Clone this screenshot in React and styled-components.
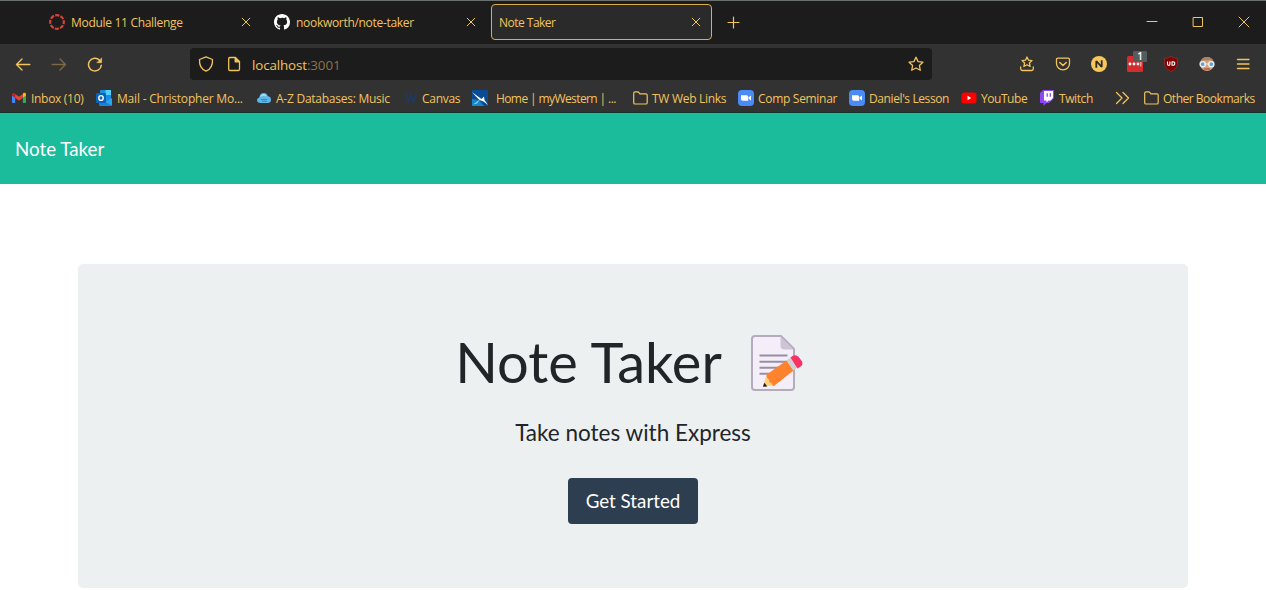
import React from "react";
import styled, { createGlobalStyle } from "styled-components";

const GOLD = "#f2c45f";

const Global = createGlobalStyle`
  *, *::before, *::after { box-sizing: border-box; }
  html, body { margin: 0; padding: 0; background: #fff; }
  body { height: 590px; overflow: hidden; font-family: Lato, sans-serif; color: #212529; }
`;

/* ---------- browser chrome ---------- */

const Chrome = styled.header`
  height: 113px;
  background: #323232;
  border-top: 1px solid #6c706e;
  border-bottom: 1px solid #10362f;
  color: ${GOLD};
  font-family: "Open Sans", "Noto Sans", sans-serif;
  font-size: 12px;
  svg { display: block; flex: none; }
`;

const TabStrip = styled.div`
  display: flex;
  align-items: center;
  height: 43px;
  background: #1c1c1c;
  padding: 0 0 1px 41px;
`;

const Tab = styled.div`
  display: flex;
  align-items: center;
  gap: 6px;
  width: ${(p) => p.$w}px;
  height: 36px;
  padding: 0 ${(p) => (p.$active ? 10 : 15)}px 0 ${(p) => (p.$active ? 7 : 8)}px;
  border-radius: 4px;
  ${(p) => p.$active && `border: 1px solid #dcae4c; background: #2a2a2a;`}
`;

const Label = styled.span`
  white-space: pre;
  line-height: 16px;
  letter-spacing: ${(p) => p.$ls || 0}px;
`;

const TabLabel = styled(Label)`
  flex: 1;
  padding-top: 1px;
`;

const NewTab = styled.div`
  margin-left: 15px;
`;

const WindowButtons = styled.div`
  display: flex;
  gap: 34px;
  margin-left: auto;
  padding-right: 16px;
`;

const Toolbar = styled.div`
  display: flex;
  align-items: center;
  height: 40px;
  padding: 0 15px;
`;

const NavButtons = styled.div`
  display: flex;
  gap: 20px;
  width: 175px;
`;

const UrlBar = styled.div`
  display: flex;
  align-items: center;
  width: 742px;
  height: 32px;
  padding: 0 8px;
  border-radius: 4px;
  background: #1c1c1c;
`;

const Url = styled(Label)`
  flex: 1;
  margin-left: 10px;
  padding-top: 1px;
  font-size: 13.4px;
  line-height: 18px;
`;

const Port = styled.span`
  color: #8b7544;
`;

const PageIcon = styled.div`
  margin-left: 12px;
`;

const Extensions = styled.div`
  display: flex;
  gap: 20px;
  margin-left: auto;
`;

const ExtBox = styled.div`
  position: relative;
  width: 16px;
  height: 16px;
`;

const Badge = styled.span`
  position: absolute;
  left: 6px;
  top: -5px;
  width: 14px;
  height: 11px;
  border-radius: 1px;
  background: #565b5e;
  color: #fff;
  font: 600 10px/11px "Open Sans", sans-serif;
  text-align: center;
`;

const Bookmarks = styled.div`
  display: flex;
  align-items: center;
  height: 28px;
  padding-left: 11px;
`;

const Bookmark = styled.div`
  display: flex;
  align-items: center;
  flex: none;
  gap: ${(p) => p.$gap || 4}px;
  width: ${(p) => p.$w}px;
  ${Label} { padding-top: 1px; }
`;

/* ---------- page ---------- */

const Navbar = styled.nav`
  display: flex;
  align-items: center;
  height: 71px;
  padding: 0 15px;
  background: #1abc9c;
`;

const Brand = styled.a`
  color: #fff;
  font-size: 18.75px;
  line-height: 28px;
`;

const Main = styled.main`
  width: 1110px;
  margin: 80px auto 0;
`;

const Jumbotron = styled.section`
  display: flex;
  flex-direction: column;
  align-items: center;
  height: 324px;
  padding-top: 64px;
  border-radius: 5px;
  background: #ecf0f1;
`;

const Title = styled.h1`
  display: flex;
  align-items: center;
  gap: 28px;
  height: 67px;
  margin: 0;
  padding-right: 5px;
  font-weight: 400;
  font-size: 56px;
  line-height: 67px;
  svg { margin-top: 2px; }
`;

const Subtitle = styled.h4`
  margin: 23px 0 0;
  font-weight: 400;
  font-size: 22.5px;
  line-height: 30px;
`;

const Button = styled.button`
  width: 130px;
  height: 46px;
  margin: 30px 0 0;
  padding: 0;
  border: 0;
  border-radius: 4px;
  background: #2c3e50;
  color: #fff;
  font: 400 18.75px/28px Lato, sans-serif;
`;

/* ---------- icons ---------- */

const Svg = ({ w = 16, h = 16, vb, children, c = GOLD, sw = 1.3 }) => (
  <svg width={w} height={h} viewBox={vb || `0 0 ${w} ${h}`} fill="none" stroke={c} strokeWidth={sw} strokeLinecap="round" strokeLinejoin="round">
    {children}
  </svg>
);

const Close = () => <Svg w={10} h={10} sw={1}><path d="M1.200 1.200l7.600 7.600M8.800 1.200l-7.600 7.600" /></Svg>;
const CanvasRing = () => (
  <svg width="16" height="16" viewBox="0 0 16 16">
    <circle cx="8" cy="8" r="6.8" fill="none" stroke="#d8433a" strokeWidth="2.2" strokeDasharray="4.14 1.2" strokeDashoffset="2" />
  </svg>
);
const Github = () => (
  <svg width="16" height="16" viewBox="0 0 16 16" fill="#fff">
    <path d="M8 0C3.58 0 0 3.58 0 8c0 3.54 2.29 6.53 5.47 7.59.4.07.55-.17.55-.38 0-.19-.01-.82-.01-1.49-2.01.37-2.53-.49-2.69-.94-.09-.23-.48-.94-.82-1.13-.28-.15-.68-.52-.01-.53.63-.01 1.08.58 1.23.82.72 1.21 1.87.87 2.33.66.07-.52.28-.87.51-1.07-1.78-.2-3.64-.89-3.64-3.95 0-.87.31-1.59.82-2.15-.08-.2-.36-1.02.08-2.12 0 0 .67-.21 2.2.82A7.6 7.6 0 0 1 8 3.86c.68 0 1.36.09 2 .27 1.53-1.04 2.2-.82 2.2-.82.44 1.1.16 1.92.08 2.12.51.56.82 1.27.82 2.15 0 3.07-1.87 3.75-3.65 3.95.29.25.54.73.54 1.48 0 1.07-.01 1.93-.01 2.2 0 .21.15.46.55.38A8.01 8.01 0 0 0 16 8c0-4.42-3.58-8-8-8z" />
  </svg>
);
const Gmail = () => (
  <svg width="16" height="16" viewBox="0 0 16 16">
    <path d="M1 5v7.2q0 .8.8.8h2.4V7.2z" fill="#4285f4" />
    <path d="M15 5v7.2q0 .8-.8.8h-2.4V7.2z" fill="#34a853" />
    <path d="M11.800 4v3.800L15 5.400V4.300c0-1.500-1.600-1.900-2.600-1.200z" fill="#fbbc04" />
    <path d="M1 5.400l3.200 2.400V4l-.6-.6C2.600 2.500 1 3 1 4.300z" fill="#c5221f" />
    <path d="M4.200 7.800V3.900L8 6.800l3.800-2.900v3.900L8 10.700z" fill="#ea4335" />
  </svg>
);
const Outlook = () => (
  <svg width="16" height="16" viewBox="0 0 16 16">
    <rect x="4" y="0" width="11" height="12" rx="1" fill="#1a8fe0" />
    <rect x="9.5" y="0" width="5.5" height="5" fill="#50d0fa" />
    <rect x="4" y="5" width="5.5" height="4" fill="#1266b4" />
    <path d="M3 15.500L16 8v6.700q0 1-1 1H4q-1 0-1-.8z" fill="#2ba5ee" />
    <path d="M3 9l13 6.500H4q-1 0-1-1z" fill="#1784d8" />
    <rect x="0" y="3" width="10" height="10" rx="1" fill="#0a63b8" />
    <ellipse cx="5" cy="8" rx="2.2" ry="2.4" fill="none" stroke="#fff" strokeWidth="1.4" />
  </svg>
);
const Cloud = () => (
  <svg width="16" height="16" viewBox="0 0 16 16">
    <path d="M4.500 13Q1 13 1 10q0-2 2.300-2.600Q4 3 7.800 3q3 0 4 3.200 3.200.4 3.200 3.500 0 3.300-3.500 3.300z" fill="#5db5e8" />
    <path d="M4 7q1-3 4-3 2 0 3 2.500Q7 5.500 4 7z" fill="#a6dcf7" />
    <path d="M5 9.500h6M6 11.200h5" stroke="#2f84bd" strokeWidth=".9" />
  </svg>
);
const WMark = () => (
  <svg width="16" height="16" viewBox="0 0 16 16" fill="none" stroke="#1e3a66">
    <path d="M3.500 3.500L6 12.500 9 4l2.500 8.500L14 3.500" strokeWidth="1.400" />
    <path d="M2 3.500h3M7.500 3.500h3M12.500 3.500h3" strokeWidth=".8" />
  </svg>
);
const Western = () => (
  <svg width="16" height="16" viewBox="0 0 16 16">
    <rect width="16" height="16" fill="#0b4a94" />
    <path d="M0 9l7 1 5 6H0z" fill="#1585c8" />
    <path d="M0 2l6 4.500L9.500 9 12 6.500l.5 3.500L16 15l-4.500-3.500L7.500 10 4 6.500z" fill="#fff" />
    <path d="M8 9.500L1 14.500l4-1z" fill="#8fd0f2" />
  </svg>
);
const Folder = () => <Svg sw={1.2}><path d="M1.700 12.700V3.200q0-1.400 1.400-1.400h2.600q.8 0 1.300.8l.9 1.300h6q1.300 0 1.300 1.300v7.500q0 1.300-1.300 1.300H3q-1.300 0-1.300-1.300z" /></Svg>;
const Zoom = () => (
  <svg width="16" height="16" viewBox="0 0 16 16">
    <rect width="16" height="16" rx="4" fill="#4a8cf7" />
    <path d="M3 5.300h5.500q1.700 0 1.700 1.500v3.900H4.800Q3 10.700 3 9z" fill="#fff" />
    <path d="M10.700 7.300L13 5.500v5l-2.300-1.700z" fill="#fff" />
  </svg>
);
const Youtube = () => (
  <svg width="16" height="16" viewBox="0 0 16 16">
    <rect x=".5" y="2.5" width="15" height="11" rx="2.5" fill="#f00" />
    <path d="M6.500 5.800v4.400L10.300 8z" fill="#fff" />
  </svg>
);
const Twitch = () => (
  <svg width="16" height="16" viewBox="0 0 16 16">
    <path d="M4 0L1 3v10h3.500v3l3-3H10l5-5V0z" fill="#8f45f5" />
    <path d="M5 1v9.500h2.500v2l2-2h2L14 8V1z" fill="#fff" />
    <path d="M8.200 3.200v3.600M11.300 3.200v3.600" stroke="#8f45f5" strokeWidth="1.3" />
  </svg>
);
const StarPath = "M8 1.200l2.100 4.400 4.800.6-3.500 3.300.9 4.800L8 12l-4.300 2.300.9-4.800L1.100 6.200l4.800-.6z";

const Memo = () => (
  <svg width="56" height="58" viewBox="0 0 56 58">
    <path d="M5 2h26l13 13v38q0 3-3 3H5q-3 0-3-3V5q0-3 3-3z" fill="#f3eef8" stroke="#b4acbc" strokeWidth="2" />
    <path d="M30.500 2.500v9q0 4 4 4h9z" fill="#cdc4d6" />
    <path d="M9.500 21.500h28M9.500 27.700h28M9.500 33.700h20M9.500 39.700h14" stroke="#998ea4" strokeWidth="1.9" />
    <path d="M13 52.500l3.700-12L25 51z" fill="#ffce7c" />
    <path d="M13 52.800l1.300-4 3 3.600z" fill="#1c1c1c" />
    <path d="M16.700 40.500L36.500 26.500l7 10L24 52q-2 0-2.500-3-3-.5-2.300-3.500-3-1-2.500-5z" fill="#ff822d" />
    <path d="M36.500 26.500l4-3 7 10-4 3z" fill="#d3cdd4" />
    <path d="M40.500 23.500l2-1.500q3.500-2 6 .8l3.500 4.700q1.500 3-1.500 5l-3 2z" fill="#fb3064" />
  </svg>
);

const bookmarks = [
  { icon: <Gmail />, text: "Inbox (10)", w: 85, ls: -0.3 },
  { icon: <Outlook />, text: "Mail - Christopher Mo...", w: 160, gap: 5, ls: -0.2 },
  { icon: <Cloud />, text: "A-Z Databases: Music", w: 146, ls: -0.25 },
  { icon: <WMark />, text: "Canvas", w: 70, ls: -0.3 },
  { icon: <Western />, text: "Home | myWestern | ...", w: 160, gap: 8, ls: -0.6 },
  { icon: <Folder />, text: "TW Web Links", w: 106, ls: -0.3 },
  { icon: <Zoom />, text: "Comp Seminar", w: 111, ls: -0.3 },
  { icon: <Zoom />, text: "Daniel's Lesson", w: 112, ls: -0.4 },
  { icon: <Youtube />, text: "YouTube", w: 78, ls: -0.45 },
  { icon: <Twitch />, text: "Twitch", w: 75, ls: -0.4 },
];

export default function App() {
  return (
    <>
      <Global />
      <Chrome>
        <TabStrip>
          <Tab $w={225}><CanvasRing /><TabLabel $ls={-0.3}>Module 11 Challenge</TabLabel><Close /></Tab>
          <Tab $w={225}><Github /><TabLabel $ls={-0.3}>nookworth/note-taker</TabLabel><Close /></Tab>
          <Tab $w={221} $active><TabLabel $ls={-0.52}>Note Taker</TabLabel><Close /></Tab>
          <NewTab><Svg w={13} h={13} sw={1.2}><path d="M6.500 1v11M1 6.500h11" /></Svg></NewTab>
          <WindowButtons>
            <Svg w={12} h={12} sw={1}><path d="M1 5.500h10" /></Svg>
            <Svg w={12} h={12} sw={1}><path d="M1.500 1.500h9v9h-9z" /></Svg>
            <Svg w={12} h={12} sw={1}><path d="M1 1l10 10M11 1L1 11" /></Svg>
          </WindowButtons>
        </TabStrip>
        <Toolbar>
          <NavButtons>
            <Svg sw={1.4}><path d="M14.800 8.500H1.500M7 3L1.500 8.500 7 14" /></Svg>
            <Svg sw={1.4} c="#7d6a43"><path d="M1.200 8.500h13.300M9 3L14.500 8.500 9 14" /></Svg>
            <Svg sw={1.5}><path d="M14.300 9.200A6.400 6.400 0 1 1 12.600 4.200" /><path d="M14.600 2.200v4.500h-4.500z" fill={GOLD} strokeWidth=".6" /></Svg>
          </NavButtons>
          <UrlBar>
            <Svg><path d="M8 .9l6.500 2.600c.3 5.500-1.500 9.700-6.500 11.700-5-2-6.800-6.200-6.500-11.700z" /></Svg>
            <PageIcon><Svg><path d="M4 1.500h5.200L13.500 5.800v7.400q0 1.300-1.300 1.300H4q-1.300 0-1.300-1.300V2.800Q2.700 1.500 4 1.500z" /><path d="M9.200 1.500v4.300h4.300z" fill={GOLD} /></Svg></PageIcon>
            <Url $ls={-0.13}>localhost<Port>:3001</Port></Url>
            <Svg><path d={StarPath} /></Svg>
          </UrlBar>
          <Extensions>
            <Svg><path d="M8 1l1.500 3.200 3.500.4-2.600 2.400.7 3.500L8 8.800l-3.100 1.700.7-3.500L3 4.600l3.500-.4z" /><path d="M1.700 11v1.800q0 1.700 1.700 1.700h9.200q1.700 0 1.700-1.700V11" /></Svg>
            <Svg><path d="M3 2.200h10q1.500 0 1.500 1.500v3.800a6.500 6.300 0 0 1-13 0V3.700q0-1.500 1.500-1.500z" /><path d="M4.800 6.500L8 9.500l3.200-3" strokeWidth={1.6} /></Svg>
            <Svg><circle cx="8" cy="8" r="8" fill="#f6c75b" stroke="none" /><path d="M5.300 11.800V5l5.400 6V4.200" stroke="#2b2925" strokeWidth="1.8" strokeLinejoin="bevel" strokeLinecap="butt" /></Svg>
            <ExtBox>
              <Svg><rect width="16" height="16" rx="1.5" fill="#d32d2e" stroke="none" /><g fill="#fff" stroke="none"><circle cx="3" cy="8" r="1.4" /><circle cx="7" cy="8" r="1.4" /><circle cx="11" cy="8" r="1.4" /><path d="M13.500 5.500h.8v5h-.8z" /></g></Svg>
              <Badge>1</Badge>
            </ExtBox>
            <Svg><path d="M8 .5q3 2 6.500 2v5q0 5-6.500 8-6.500-3-6.500-8v-5q3.500 0 6.500-2z" fill="#800000" stroke="#a0443c" strokeWidth=".5" /><path d="M4.500 5.500v2.700q0 1.200 1.200 1.200t1.200-1.200V5.500M9 5.700v3.500q2.800.3 2.800-1.700T9 5.700z" stroke="#fff" strokeWidth="1.1" strokeLinecap="butt" /></Svg>
            <Svg><circle cx="8" cy="8" r="7" fill="#dba078" stroke="none" /><path d="M1.500 5.500Q3 1 8 1t6.500 4.500Q11 3 8 4.500 5 3.500 1.500 5.500z" fill="#a98565" stroke="none" /><circle cx="3.700" cy="8.200" r="2.600" fill="#6aa3c8" stroke="#e8eff3" strokeWidth="1.400" /><circle cx="12.300" cy="8.200" r="2.600" fill="#6aa3c8" stroke="#e8eff3" strokeWidth="1.400" /><path d="M6 8h4" stroke="#e8eff3" strokeWidth="1" /><path d="M5.500 13h5" stroke="#b0604c" /></Svg>
            <Svg sw={1.3}><path d="M2.500 3.500h11.500M2.500 8h11.500M2.500 12.500h11.500" /></Svg>
          </Extensions>
        </Toolbar>
        <Bookmarks>
          {bookmarks.map((b) => (
            <Bookmark key={b.text} $w={b.w} $gap={b.gap}>{b.icon}<Label $ls={b.ls}>{b.text}</Label></Bookmark>
          ))}
          <Bookmark $w={29}><Svg><path d="M2.500 2.500L8 8l-5.500 5.500M9 2.500L14.500 8 9 13.500" /></Svg></Bookmark>
          <Bookmark><Folder /><Label $ls={-0.48}>Other Bookmarks</Label></Bookmark>
        </Bookmarks>
      </Chrome>
      <Navbar><Brand>Note Taker</Brand></Navbar>
      <Main>
        <Jumbotron>
          <Title><span>Note Taker</span><Memo /></Title>
          <Subtitle>Take notes with Express</Subtitle>
          <Button>Get Started</Button>
        </Jumbotron>
      </Main>
    </>
  );
}
